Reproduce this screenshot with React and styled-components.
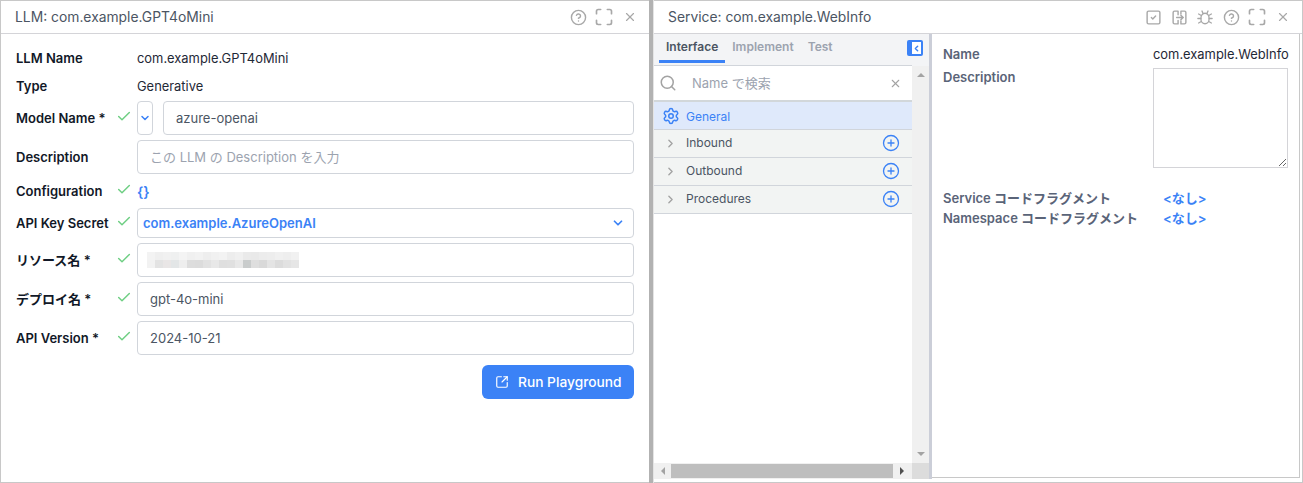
import React from 'react'
import styled, { createGlobalStyle } from 'styled-components'
import { Check, ChevronDown, ChevronLeft, ChevronRight, CircleHelp, CirclePlus, Maximize, Search, Settings, SquareArrowOutUpRight, SquareCheck, X } from 'lucide-react'

const fontStack = `Inter, "Noto Sans CJK JP", sans-serif`

const GlobalStyle = createGlobalStyle`
html, body {
  margin: 0;
  padding: 0;
  background: #fff;
  overflow: hidden;
}
* { box-sizing: border-box; }
`

const Page = styled.div`
width: 1303px;
height: 483px;
display: flex;
font-family: ${fontStack};
font-size: 13px;
color: #1f2937;
`

const Panel = styled.section`
flex: ${props => props.$grow ? '1' : '0 0 649px'};
height: 100%;
display: flex;
flex-direction: column;
border: 1px solid #c8c8c8;
border-left: ${props => props.$grow ? '0' : '1px solid #c8c8c8'};
border-right: ${props => props.$grow ? '1px solid #c8c8c8' : '0'};
`

const Gutter = styled.div`
flex: 0 0 5px;
background: #b2b2b2;
border-right: 1px solid #e4e4e4;
`

const Header = styled.header`
flex: 0 0 33px;
display: flex;
align-items: center;
justify-content: space-between;
padding: 0 ${props => props.$right}px 0 ${props => props.$left}px;
border-bottom: 1px solid #d4d4d8;
`

const Title = styled.h2`
margin: 0;
font-size: 13.85px;
font-weight: 400;
color: #4b5563;
`

const Tools = styled.div`
display: flex;
align-items: center;
color: #a8a8a8;
`

const Tool = styled.span`
width: 26px;
display: flex;
justify-content: center;
align-items: center;
`

const Form = styled.div`
padding: 11px 15px 0 15px;
display: flex;
flex-direction: column;
gap: 5px;
`

const Row = styled.div`
display: grid;
grid-template-columns: 100px 21px 1fr;
align-items: center;
height: ${props => props.$h}px;
`

const Label = styled.label`
font-weight: 600;
font-size: 13px;
color: #111827;
white-space: nowrap;
margin-top: ${props => props.$cjk ? '-2px' : '0'};
`

const CheckSlot = styled.span`
display: flex;
align-items: center;
justify-content: center;
color: #6fcf84;
margin-top: -3px;
padding-right: 5px;
`

const Value = styled.span`
color: #1f2937;
font-size: 12.9px;
`

const Fields = styled.div`
display: flex;
gap: 10px;
height: 100%;
min-width: 0;
`

const Field = styled.input`
flex: 1;
width: 100%;
min-width: 0;
height: 100%;
border: 1px solid #d1d5db;
border-radius: 4px;
padding: 0 12px;
font: 400 13px ${fontStack};
color: #4b5563;
outline: none;
background: #fff;
&::placeholder { color: #9ca3af; }
`

const MiniSelect = styled.div`
flex: 0 0 16px;
height: 100%;
border: 1px solid #d1d5db;
border-radius: 4px;
display: flex;
align-items: center;
justify-content: center;
color: #3b82f6;
`

const SelectBox = styled.div`
height: 100%;
border: 1px solid #d1d5db;
border-radius: 4px;
display: flex;
align-items: center;
justify-content: space-between;
padding: 0 8px 0 5px;
font-weight: 600;
font-size: 13px;
color: #3b82f6;
`

const Braces = styled.span`
color: #3b82f6;
font-weight: 600;
font-size: 14px;
`

const FieldBox = styled.div`
height: 100%;
border: 1px solid #d1d5db;
border-radius: 4px;
display: flex;
align-items: center;
padding-left: 9px;
`

const Actions = styled.div`
display: flex;
justify-content: flex-end;
margin-top: 5px;
`

const RunButton = styled.button`
width: 152px;
height: 34px;
display: flex;
align-items: center;
gap: 9px;
padding: 0 0 1px 13px;
border: 0;
border-radius: 6px;
background: #3b82f6;
color: #fff;
font: 500 13.75px ${fontStack};
`

const Body = styled.div`
flex: 1;
min-height: 0;
display: flex;
padding-bottom: 3px;
`

const TreeColumn = styled.div`
flex: 0 0 275px;
display: flex;
flex-direction: column;
`

const TabBar = styled.div`
flex: 0 0 32px;
display: flex;
align-items: flex-start;
padding-left: 5px;
background: #f3f4f6;
position: relative;
`

const TabsLine = styled.div`
display: flex;
width: 258px;
height: 32px;
margin-left: -5px;
padding-left: 5px;
border-bottom: 1px solid #d1d5db;
`

const Tab = styled.div`
height: 29px;
padding: 5px 7px 0;
font-size: 12px;
font-weight: 600;
color: ${props => props.$active ? '#4b5563' : '#9ca3af'};
border-bottom: 3px solid ${props => props.$active ? '#3b82f6' : 'transparent'};
`

const Collapse = styled.div`
position: absolute;
left: 253px;
top: 6px;
width: 16px;
height: 16px;
border-radius: 2px;
background: #3b82f6;
padding: 2px 2px 2px 5px;
`

const CollapseInner = styled.div`
width: 100%;
height: 100%;
background: #fff;
color: #3b82f6;
display: flex;
align-items: center;
justify-content: center;
`

const TreeMiddle = styled.div`
flex: 1;
min-height: 0;
display: flex;
`

const TreeList = styled.div`
flex: 1;
min-width: 0;
`

const SearchRow = styled.div`
height: 34px;
display: flex;
align-items: center;
padding: 0 10px 0 5px;
color: #a3a3a3;
`

const SearchHint = styled.span`
flex: 1;
margin: -2px 0 0 15px;
font-size: 13px;
color: #9ca3af;
`

const GeneralRow = styled.div`
height: 30px;
display: flex;
align-items: center;
gap: 6px;
padding: 1px 0 0 8px;
background: #dfe9fb;
border-top: 2px solid #d2d7da;
border-bottom: 1px solid #d1d5db;
color: #3b82f6;
font-size: 12px;
`

const TreeRow = styled.div`
height: 28px;
display: flex;
align-items: center;
padding: 0 12px 1px 10px;
background: #f2f4f3;
border-bottom: 1px solid #d1d5db;
color: #a3a3a3;
`

const TreeName = styled.span`
flex: 1;
margin: -2px 0 0 9px;
font-size: 12px;
color: #4b5563;
`

const AddIcon = styled.span`
display: flex;
color: #3b82f6;
`

const VScroll = styled.div`
flex: 0 0 17px;
background: #f0f0f0;
display: flex;
flex-direction: column;
justify-content: space-between;
align-items: center;
padding: 7px 0;
`

const HScroll = styled.div`
flex: 0 0 16px;
display: flex;
align-items: center;
background: #f0f0f0;
`

const ArrowSlot = styled.div`
flex: 0 0 17px;
display: flex;
justify-content: center;
`

const HThumb = styled.div`
flex: 0 0 222px;
height: 14px;
background: #bebebe;
`

const Corner = styled.div`
flex: 0 0 17px;
height: 100%;
margin-left: auto;
background: #dcdcdc;
`

const Triangle = styled.div`
width: 0;
height: 0;
border-style: solid;
border-color: transparent;
${props => props.$dir === 'up' && 'border-width: 0 4px 4px; border-bottom-color: #a3a3a3;'}
${props => props.$dir === 'down' && 'border-width: 4px 4px 0; border-top-color: #a3a3a3;'}
${props => props.$dir === 'left' && 'border-width: 4px 4px 4px 0; border-right-color: #a3a3a3;'}
${props => props.$dir === 'right' && 'border-width: 4px 0 4px 4px; border-left-color: #505050;'}
`

const Divider = styled.div`
flex: 0 0 3px;
background: #cbced8;
`

const Detail = styled.div`
flex: 0 0 367px;
margin-bottom: 1px;
border-right: 1px solid #c8c8c8;
border-bottom: 1px solid #c8c8c8;
padding: 11px 10px 0 11px;
display: flex;
flex-direction: column;
`

const DetailRow = styled.div`
display: grid;
grid-template-columns: 210px 1fr;
align-items: ${props => props.$top ? 'start' : 'center'};
height: ${props => props.$h}px;
margin-top: ${props => props.$gap || 0}px;
`

const DetailLabel = styled.span`
font-weight: 600;
font-size: 13px;
line-height: 18px;
color: #5a6478;
white-space: nowrap;
`

const NoneLink = styled.a`
padding-left: 10px;
margin-top: -2px;
font-weight: 600;
font-size: 13px;
color: #3b82f6;
`

const DescArea = styled.textarea`
display: block;
width: 135px;
height: 100px;
border: 1px solid #d4d4d8;
border-radius: 0;
outline: none;
resize: both;
background: #fff;
`

// pixelated block that hides the resource name
const mosaic = [
  ['#f3f3f3', '#efefef', '#f1f1f1', '#eff0f0', '#f4f4f4', '#f0f0f0', '#f2f2f2', '#eeeeee', '#f1f1f1', '#f3f3f3', '#ededed', '#f0f0f0', '#eaeaea', '#e9e9e9', '#ececec', '#ededed', '#f0f0f0', '#eeeeee', '#f1f1f1'],
  ['#f2f2f2', '#e3e3e3', '#e9e6e6', '#e3e6e7', '#eeeeee', '#dddddd', '#dcdcdc', '#e2e2e2', '#e8e8e8', '#dfdfdf', '#e0e0e0', '#e8e8e8', '#c9cccc', '#dedede', '#d9d9d9', '#e4e4e4', '#dcdcdc', '#e2e2e2', '#e6e6e6'],
]

const Mosaic = () => (
  <svg width="152" height="16" shapeRendering="crispEdges">
    {mosaic.map((line, y) => line.map((fill, x) => (
      <rect key={`${x}-${y}`} x={x * 8} y={y * 8} width="8" height="8" fill={fill} />
    )))}
  </svg>
)

const TransferIcon = () => (
  <svg width="17" height="17" viewBox="0 0 24 24" fill="none" stroke="currentColor" strokeWidth="2" strokeLinecap="round" strokeLinejoin="round">
    <path d="M10 8V3H5a2 2 0 0 0-2 2v14a2 2 0 0 0 2 2h5v-5" />
    <path d="M14 7V3h5a2 2 0 0 1 2 2v14a2 2 0 0 1-2 2h-5v-4" />
    <path d="M8 12h9" />
    <path d="M14 9l3 3-3 3" />
  </svg>
)

const BugIcon = () => (
  <svg width="18" height="18" viewBox="0 0 24 24" fill="none" stroke="currentColor" strokeWidth="1.8" strokeLinecap="round" strokeLinejoin="round">
    <ellipse cx="12" cy="14" rx="5.5" ry="7" />
    <path d="M9.5 7.5L8 4M14.5 7.5L16 4" />
    <path d="M7 10L3.5 8M6.5 14H2.5M7 18l-3.5 2" />
    <path d="M17 10l3.5-2M17.5 14h4M17 18l3.5 2" />
  </svg>
)

const WindowTools = () => (
  <>
    <Tool><CircleHelp size={17} strokeWidth={2} /></Tool>
    <Tool><Maximize size={20} strokeWidth={2} /></Tool>
    <Tool><X size={14} strokeWidth={2} /></Tool>
  </>
)

const Ok = () => (
  <CheckSlot><Check size={17} strokeWidth={2.2} /></CheckSlot>
)

const LlmPanel = () => (
  <Panel>
    <Header $left={14} $right={6}>
      <Title>LLM: com.example.GPT4oMini</Title>
      <Tools><WindowTools /></Tools>
    </Header>
    <Form>
      <Row $h={26}>
        <Label>LLM Name</Label><span />
        <Value>com.example.GPT4oMini</Value>
      </Row>
      <Row $h={20}>
        <Label>Type</Label><span />
        <Value>Generative</Value>
      </Row>
      <Row $h={34}>
        <Label>Model Name *</Label><Ok />
        <Fields>
          <MiniSelect><ChevronDown size={12} strokeWidth={3} /></MiniSelect>
          <Field readOnly value="azure-openai" />
        </Fields>
      </Row>
      <Row $h={34}>
        <Label>Description</Label><span />
        <Field readOnly placeholder="この LLM の Description を入力" />
      </Row>
      <Row $h={24}>
        <Label>Configuration</Label><Ok />
        <Braces>{'{}'}</Braces>
      </Row>
      <Row $h={30}>
        <Label>API Key Secret</Label><Ok />
        <SelectBox>
          com.example.AzureOpenAI
          <ChevronDown size={14} strokeWidth={3} />
        </SelectBox>
      </Row>
      <Row $h={34}>
        <Label $cjk>リソース名 *</Label><Ok />
        <FieldBox><Mosaic /></FieldBox>
      </Row>
      <Row $h={34}>
        <Label $cjk>デプロイ名 *</Label><Ok />
        <Field readOnly value="gpt-4o-mini" />
      </Row>
      <Row $h={34}>
        <Label>API Version *</Label><Ok />
        <Field readOnly value="2024-10-21" />
      </Row>
      <Actions>
        <RunButton>
          <SquareArrowOutUpRight size={14} strokeWidth={2} />
          Run Playground
        </RunButton>
      </Actions>
    </Form>
  </Panel>
)

const treeRows = ['Inbound', 'Outbound', 'Procedures']

const ServicePanel = () => (
  <Panel $grow>
    <Header $left={14} $right={6}>
      <Title>Service: com.example.WebInfo</Title>
      <Tools>
        <Tool><SquareCheck size={17} strokeWidth={2} /></Tool>
        <Tool><TransferIcon /></Tool>
        <Tool><BugIcon /></Tool>
        <WindowTools />
      </Tools>
    </Header>
    <Body>
      <TreeColumn>
        <TabBar>
          <TabsLine>
            <Tab $active>Interface</Tab>
            <Tab>Implement</Tab>
            <Tab>Test</Tab>
          </TabsLine>
          <Collapse><CollapseInner><ChevronLeft size={9} strokeWidth={4} /></CollapseInner></Collapse>
        </TabBar>
        <TreeMiddle>
          <TreeList>
            <SearchRow>
              <Search size={18} strokeWidth={2} />
              <SearchHint>Name で検索</SearchHint>
              <X size={13} strokeWidth={2} />
            </SearchRow>
            <GeneralRow><Settings size={18} strokeWidth={2} />General</GeneralRow>
            {treeRows.map(name => (
              <TreeRow key={name}>
                <ChevronRight size={13} strokeWidth={2.5} />
                <TreeName>{name}</TreeName>
                <AddIcon><CirclePlus size={18} strokeWidth={1.75} /></AddIcon>
              </TreeRow>
            ))}
          </TreeList>
          <VScroll>
            <Triangle $dir="up" />
            <Triangle $dir="down" />
          </VScroll>
        </TreeMiddle>
        <HScroll>
          <ArrowSlot><Triangle $dir="left" /></ArrowSlot>
          <HThumb />
          <ArrowSlot><Triangle $dir="right" /></ArrowSlot>
          <Corner />
        </HScroll>
      </TreeColumn>
      <Divider />
      <Detail>
        <DetailRow $h={18}>
          <DetailLabel>Name</DetailLabel>
          <Value>com.example.WebInfo</Value>
        </DetailRow>
        <DetailRow $h={100} $gap={5} $top>
          <DetailLabel>Description</DetailLabel>
          <DescArea readOnly />
        </DetailRow>
        <DetailRow $h={20} $gap={20}>
          <DetailLabel>Service コードフラグメント</DetailLabel>
          <NoneLink>{'<なし>'}</NoneLink>
        </DetailRow>
        <DetailRow $h={20}>
          <DetailLabel>Namespace コードフラグメント</DetailLabel>
          <NoneLink>{'<なし>'}</NoneLink>
        </DetailRow>
      </Detail>
    </Body>
  </Panel>
)

const App = () => (
  <Page>
    <GlobalStyle />
    <LlmPanel />
    <Gutter />
    <ServicePanel />
  </Page>
)

export default App
